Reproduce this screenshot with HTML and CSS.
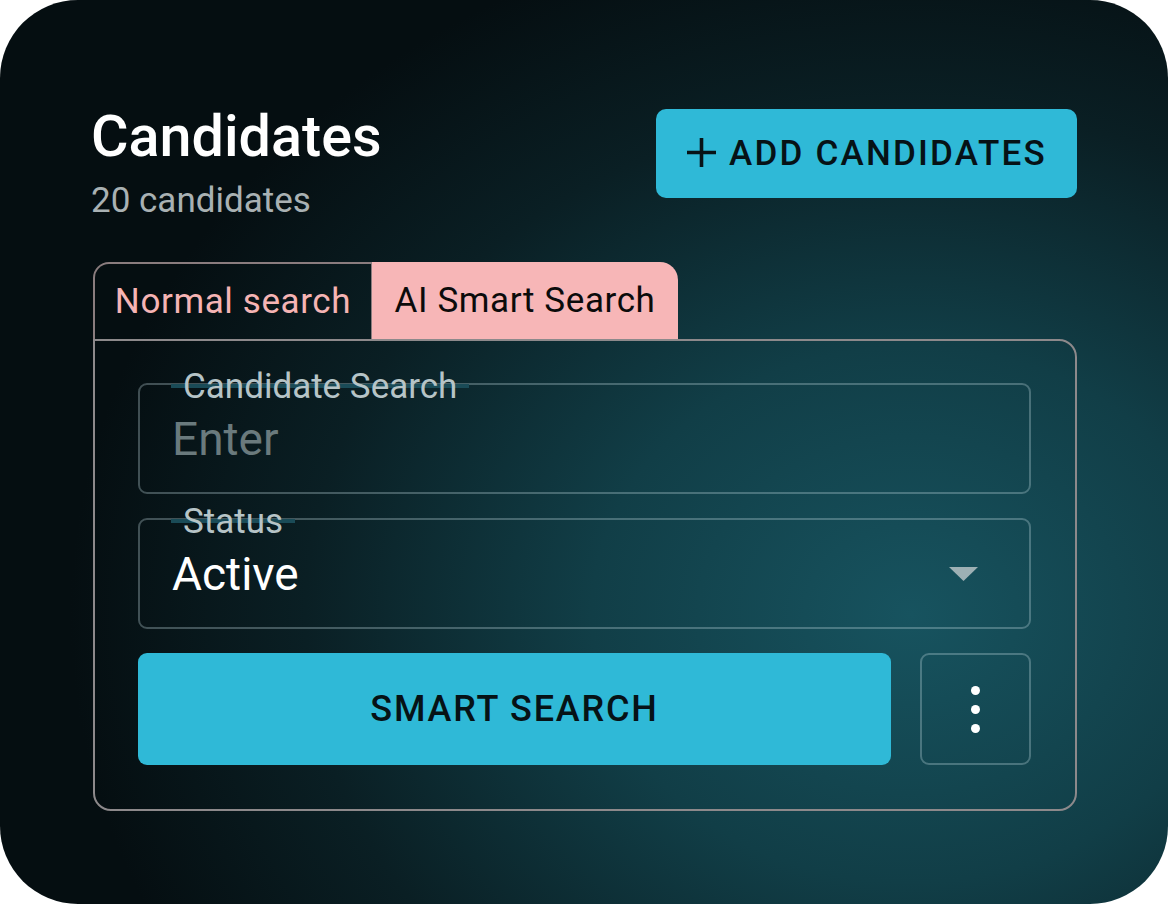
FILE: index.html
```html
<!DOCTYPE html>
<html lang="en">
<head>
    <meta charset="UTF-8">
    <link rel="stylesheet" href="styles.css">
    <title>Candidates</title>
</head>
<body>
<div class="card">
    <div class="header">
        <div class="titles">
            <h1 class="title">Candidates</h1>
            <div class="count">20 candidates</div>
        </div>
        <button class="btn-add">
            <svg class="plus" width="31" height="31" viewBox="0 0 31 31">
                <path d="M15.5 1v29M1 15.5h29" stroke="#071317" stroke-width="3.6" fill="none"/>
            </svg>
            <span>ADD CANDIDATES</span>
        </button>
    </div>

    <div class="tabs">
        <div class="tab tab-normal">Normal search</div>
        <div class="tab tab-ai">AI Smart Search</div>
    </div>
    <div class="panel">
        <div class="field">
            <label class="field-label">Candidate Search</label>
            <input class="field-input" type="text" placeholder="Enter">
        </div>
        <div class="field">
            <label class="field-label">Status</label>
            <div class="field-value">Active</div>
            <svg class="caret" width="29" height="14" viewBox="0 0 29 14">
                <path d="M0 0h29L14.5 14z" fill="#9db0b4"/>
            </svg>
        </div>
        <div class="actions">
            <button class="btn-search">SMART SEARCH</button>
            <button class="btn-more">
                <span class="dot"></span>
                <span class="dot"></span>
                <span class="dot"></span>
            </button>
        </div>
    </div>
</div>
</body>
</html>
```

FILE: styles.css
```css
html, body {
    margin: 0;
    background: #ffffff;
}
body {
    font-family: Roboto, "Noto Sans", Arial, sans-serif;
}
.card {
    width: 1168px;
    height: 904px;
    box-sizing: border-box;
    border-radius: 78px;
    padding: 105px 91px 0 93px;
    background: radial-gradient(ellipse 72% 78% at 78% 68%, #17535f 0%, #113e47 38%, #0a1f24 72%, #050e11 100%);
}
.header {
    display: flex;
    justify-content: space-between;
    align-items: flex-start;
}
.title {
    margin: 0;
    font-size: 57.5px;
    line-height: 64px;
    font-weight: 500;
    color: #ffffff;
    margin-left: -2px;
}
.count {
    margin-top: 9px;
    font-size: 35px;
    line-height: 46px;
    color: #a9b1b3;
    margin-left: -2px;
}
.btn-add {
    margin-top: 4px;
    height: 89px;
    width: 421px;
    border: 0;
    border-radius: 10px;
    background: #2fb9d7;
    color: #061216;
    font-family: inherit;
    font-size: 35px;
    font-weight: 500;
    letter-spacing: 2.2px;
    display: flex;
    align-items: center;
    justify-content: center;
    gap: 12px;
    padding: 0;
}
.plus {
    margin-top: -2px;
}
.tabs {
    display: flex;
    margin-top: 38px;
    height: 77px;
}
.tab {
    box-sizing: border-box;
    height: 77px;
    display: flex;
    align-items: center;
    justify-content: center;
    font-size: 35px;
    letter-spacing: 0.6px;
}
.tab-normal {
    width: 279px;
    border: 2px solid #8a7c7e;
    border-bottom: 0;
    border-right-width: 1px;
    border-top-left-radius: 16px;
    color: #f5b4b4;
}
.tab-ai {
    width: 306px;
    background: #f7b6b7;
    border-top-right-radius: 18px;
    color: #0b0b0b;
}
.panel {
    width: 984px;
    box-sizing: border-box;
    border: 2px solid #8d898b;
    border-radius: 0 18px 18px 18px;
    padding: 42px 44px 44px 43px;
    display: flex;
    flex-direction: column;
    gap: 24px;
}
.field {
    position: relative;
    height: 111px;
    box-sizing: border-box;
    border: 2px solid rgba(190, 215, 220, 0.32);
    border-radius: 9px;
    display: flex;
    align-items: center;
    padding: 0 32px;
}
.field-label {
    position: absolute;
    left: 31px;
    top: -16px;
    padding: 0 12px;
    font-size: 35px;
    line-height: 36px;
    color: #b6c4c7;
    background: linear-gradient(#0000 0, #0000 15px, #1a4b57 15px, #1a4b57 19px, #0000 19px);
}
.field-input {
    width: 100%;
    border: 0;
    outline: 0;
    background: transparent;
    padding: 0;
    font-family: inherit;
    font-size: 46px;
    color: #ffffff;
}
.field-input::placeholder {
    color: #6a7a7d;
}
.field-value {
    flex: 1;
    font-size: 46px;
    color: #ffffff;
}
.caret {
    margin-right: 19px;
}
.actions {
    display: flex;
    gap: 29px;
    height: 112px;
}
.btn-search {
    flex: 1;
    border: 0;
    border-radius: 9px;
    background: #2fb9d7;
    color: #061216;
    font-family: inherit;
    font-size: 36px;
    font-weight: 500;
    letter-spacing: 1.8px;
}
.btn-more {
    width: 111px;
    box-sizing: border-box;
    border: 2px solid rgba(190, 215, 220, 0.32);
    border-radius: 9px;
    background: transparent;
    display: flex;
    flex-direction: column;
    align-items: center;
    justify-content: center;
    gap: 10px;
    padding: 0;
}
.dot {
    width: 9px;
    height: 9px;
    border-radius: 50%;
    background: #ffffff;
}
```
